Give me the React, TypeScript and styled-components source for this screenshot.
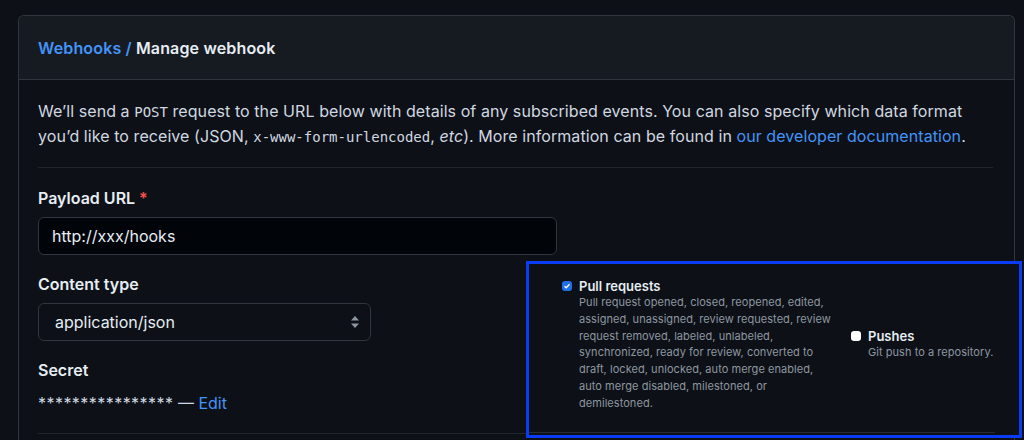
import styled, { createGlobalStyle } from "styled-components";

const GlobalStyle = createGlobalStyle`
body{
  margin:0;
  background:#0d1117;
  font-family:Inter, "Noto Sans", sans-serif;
  color:#e6edf3;
}
`
const Page = styled.div`
position:relative;
width:1024px;
height:440px;
overflow:hidden;
padding:15px 9px 0 18px;
box-sizing:border-box;
`
const Box = styled.div`
border:1px solid #30363d;
border-bottom:none;
border-radius:6px 6px 0 0;
height:440px;
`
const Header = styled.div`
height:63px;
display:flex;
align-items:center;
padding-left:19px;
background:#161b22;
border-bottom:1px solid #30363d;
border-radius:6px 6px 0 0;
font-size:16px;
font-weight:600;
letter-spacing:0.15px;
`
const Link = styled.a`
color:#4493f8;
text-decoration:none;
font-weight:${p => p.bold ? 600 : 400};
`
const Body = styled.div`
padding:19px 21px 0 19px;
`
const Intro = styled.p`
margin:0;
font-size:16px;
line-height:24px;
letter-spacing:0.07px;
color:#d1d7e0;
`
const Code = styled.code`
font-family:"DejaVu Sans Mono", monospace;
font-size:14px;
letter-spacing:0;
`
const Divider = styled.hr`
border:none;
border-top:1px solid #21262d;
margin:18px 0;
`
const Group = styled.div`
margin-bottom:17px;
`
const Label = styled.div`
font-size:16px;
line-height:24px;
font-weight:600;
margin-bottom:7px;
`
const Required = styled.span`
color:#f85149;
margin-left:4px;
`
const Input = styled.div`
width:519px;
height:38px;
box-sizing:border-box;
border:1px solid #30363d;
border-radius:6px;
background:#010409;
display:flex;
align-items:center;
padding-left:13px;
font-size:16px;
color:#e6edf3;
`
const Select = styled(Input)`
width:333px;
background:#0d1117;
padding:0 10px 0 16px;
justify-content:space-between;
`
const SecretRow = styled.div`
padding-top:2px;
font-size:16px;
line-height:24px;
color:#d1d7e0;
`
const Stars = styled.span`
letter-spacing:0.45px;
`
const Overlay = styled.div`
position:absolute;
left:526px;
top:261px;
width:496px;
height:177px;
box-sizing:border-box;
border:3px solid #0a3cf5;
background:#0d1117;
`
const Events = styled.div`
display:grid;
grid-template-columns:270px 1fr;
column-gap:19px;
align-items:center;
padding:14px 0 0 33px;
`
const Event = styled.div`
display:flex;
gap:7px;
`
const Check = styled.span`
flex:none;
width:10px;
height:10px;
margin-top:3px;
border-radius:3px;
background:${p => p.checked ? "#1f6feb" : "#ffffff"};
display:flex;
align-items:center;
justify-content:center;
`
const EventTitle = styled.div`
font-size:13px;
line-height:16px;
font-weight:600;
color:#e6edf3;
`
const EventDesc = styled.div`
font-size:11px;
line-height:16.8px;
letter-spacing:0.05px;
white-space:pre;
color:#8d96a0;
`
const OverlayLine = styled.div`
position:absolute;
left:0;
right:24px;
bottom:2px;
border-top:1px solid #262c36;
`

const SelectArrows = () => (
  <svg width="10" height="14" viewBox="0 0 10 14">
    <path d="M5 1 L9 5.5 H1 Z" fill="#8d96a0" />
    <path d="M5 13 L9 8.5 H1 Z" fill="#8d96a0" />
  </svg>
)

const events = [
  {
    name: "Pull requests",
    checked: true,
    desc: "Pull request opened, closed, reopened, edited,\nassigned, unassigned, review requested, review\nrequest removed, labeled, unlabeled,\nsynchronized, ready for review, converted to\ndraft, locked, unlocked, auto merge enabled,\nauto merge disabled, milestoned, or\ndemilestoned.",
  },
  { name: "Pushes", checked: false, desc: "Git push to a repository." },
]

const App = () => {
  return (
    <Page>
      <GlobalStyle />
      <Box>
        <Header>
          <Link href="#" bold>Webhooks /</Link>&nbsp;Manage webhook
        </Header>
        <Body>
          <Intro>
            We’ll send a <Code>POST</Code> request to the URL below with details of any subscribed events. You can also specify which data format you’d like to receive (JSON, <Code>x-www-form-urlencoded</Code>, <em>etc</em>). More information can be found in <Link href="#">our developer documentation</Link>.
          </Intro>
          <Divider />
          <Group>
            <Label>Payload URL<Required>*</Required></Label>
            <Input>http://xxx/hooks</Input>
          </Group>
          <Group>
            <Label>Content type</Label>
            <Select>application/json<SelectArrows /></Select>
          </Group>
          <Group>
            <Label>Secret</Label>
            <SecretRow><Stars>****************</Stars> — <Link href="#">Edit</Link></SecretRow>
          </Group>
          <Divider />
        </Body>
      </Box>
      <Overlay>
        <Events>
          {events.map(ev => (
            <Event key={ev.name}>
              <Check checked={ev.checked}>
                {ev.checked && (
                  <svg width="8" height="8" viewBox="0 0 8 8">
                    <path d="M1.5 4.2 L3.2 5.8 L6.5 2.2" stroke="#fff" strokeWidth="1.3" fill="none" />
                  </svg>
                )}
              </Check>
              <div>
                <EventTitle>{ev.name}</EventTitle>
                <EventDesc>{ev.desc}</EventDesc>
              </div>
            </Event>
          ))}
        </Events>
        <OverlayLine />
      </Overlay>
    </Page>
  )
}

export default App
